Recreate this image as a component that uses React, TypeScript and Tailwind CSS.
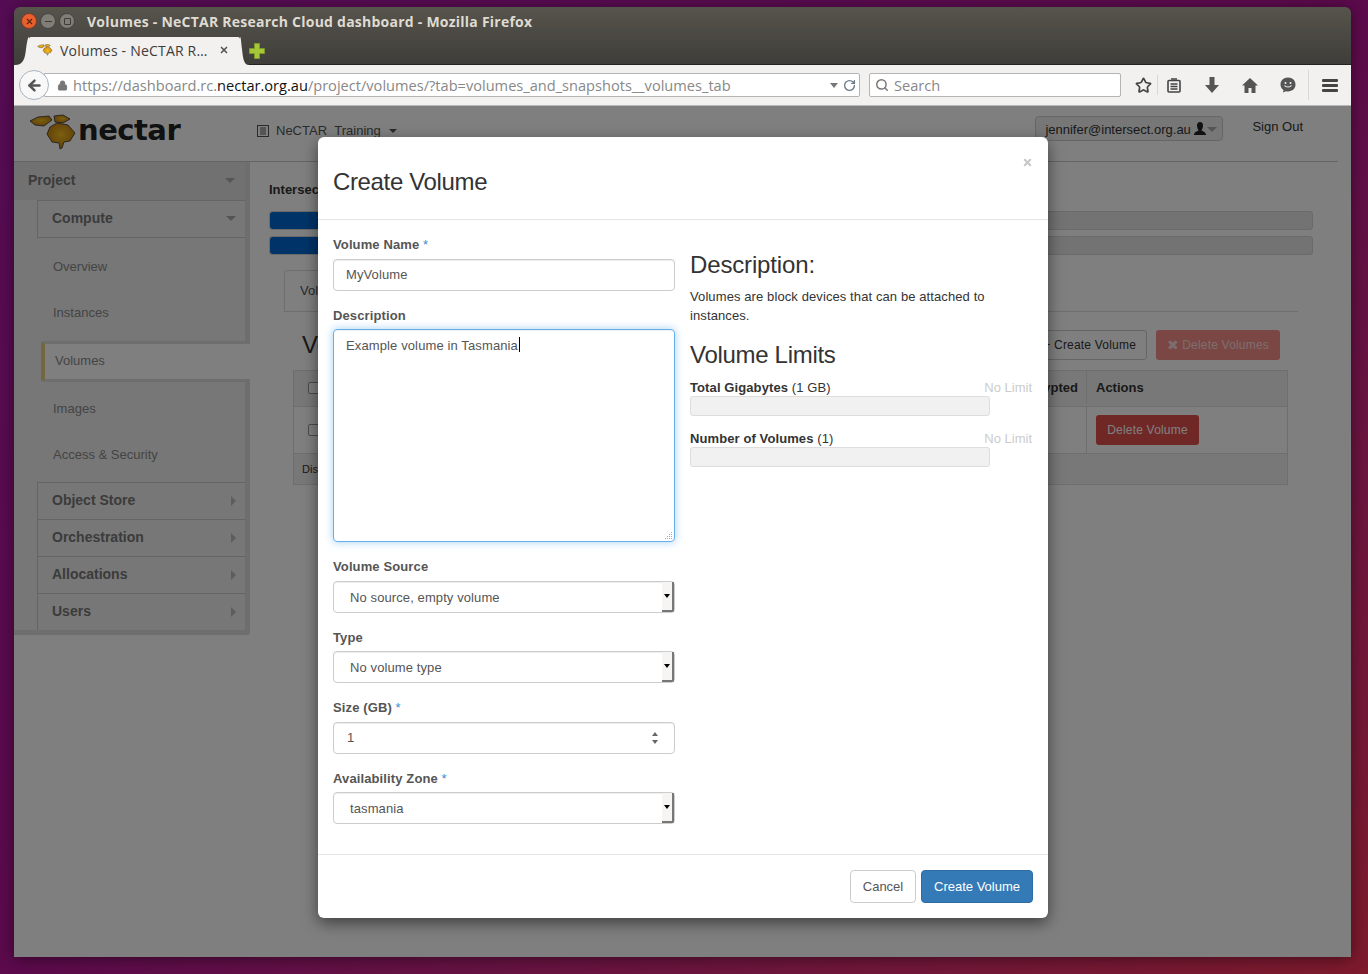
import { ArrowLeft, Lock, RotateCw, Search, Star, X } from 'lucide-react'

const sans = "font-['Liberation_Sans',Arial,sans-serif]"
const chrome = "font-['Open_Sans','Noto_Sans',sans-serif]"

function Hexes({ className }: { className: string }) {
  return (
    <svg viewBox="0 0 46 37" className={className}>
      <defs>
        <radialGradient id="honey" cx="0.5" cy="0.45" r="0.6">
          <stop offset="0" stopColor="#f4c020" />
          <stop offset="1" stopColor="#c07a10" />
        </radialGradient>
      </defs>
      <path d="M0 7 L8 3 L19 2 L22 6 L14 12 L5 11 Z" fill="url(#honey)" stroke="#333" strokeWidth="0.8" />
      <path d="M24 2 L33 1 L40 5 L33 9 L25 8 Z" fill="url(#honey)" stroke="#333" strokeWidth="0.8" />
      <path d="M27 9 L38 11 L45 19 L40 27 L34 28 L32 34 L30 35 L29 29 L22 28 L17 20 L20 13 Z" fill="url(#honey)" stroke="#333" strokeWidth="0.8" />
    </svg>
  )
}

function SelectBox({ value }: { value: string }) {
  return (
    <div className="flex h-[32px] items-stretch rounded-[4px] border border-[#ccc] bg-white pl-[16px] text-[13px] tracking-[0.1px] text-[#555] shadow-[inset_0_1px_1px_rgba(0,0,0,0.075)]">
      <span className="flex-1 translate-y-px self-center">{value}</span>
      <span className="flex w-[12px] items-center justify-center rounded-br-[2px] border-r-2 border-b-2 border-[#777] bg-[#f6f5f4]">
        <span className="h-0 w-0 border-x-[3px] border-t-[4px] border-x-transparent border-t-black" />
      </span>
    </div>
  )
}

function Label({ text, req, wide }: { text: string; req?: boolean; wide?: boolean }) {
  return (
    <div className={`${wide ? 'mb-[4px]' : 'mb-[3px]'} mt-[15px] h-[20px] text-[13px] leading-[20px] font-bold tracking-[0.12px] text-[#555]`}>
      {text}
      {req && <span className="font-normal text-[#428bca]"> *</span>}
    </div>
  )
}

function Quota({ name, used }: { name: string; used: string }) {
  return (
    <div className="mb-[13px] w-[342px]">
      <div className="flex h-[19px] items-center justify-between text-[13px] tracking-[0.1px] text-[#333]">
        <span><b>{name}</b> {used}</span>
        <span className="tracking-normal text-[#ccc]">No Limit</span>
      </div>
      <div className="-mt-px h-[20px] w-[300px] rounded-[3px] border border-[#ddd] bg-[#f1f1f1]" />
    </div>
  )
}

function SideSub({ label }: { label: string }) {
  return (
    <div className="flex h-[37px] items-center justify-between border-t border-l border-[#c8c8c8] pr-[9px] pb-[2px] pl-[14px] text-[14px] font-bold text-[#777]">
      {label}
      <span className="h-0 w-0 translate-y-px border-y-[5px] border-l-[5px] border-y-transparent border-l-[#bbb]" />
    </div>
  )
}

function Sidebar() {
  const link = 'flex h-[46px] items-center pl-[16px] text-[13px] text-[#8a8a8a]'
  return (
    <aside className="w-[236px] shrink-0">
      <div className="flex h-[38px] items-center justify-between border-r-[5px] border-[#dcdcdc] bg-[#e2e2e2] pr-[10px] pb-[2px] pl-[14px] text-[14px] font-bold text-[#777]">
        Project
        <span className="h-0 w-0 border-x-[5px] border-t-[5px] border-x-transparent border-t-[#aaa]" />
      </div>
      <div className="border-r-[5px] border-[#dcdcdc] bg-[#eee] pb-[5px] pl-[23px]">
        <div className="flex h-[38px] items-center justify-between border-y border-l border-[#c8c8c8] pr-[9px] pb-[2px] pl-[14px] text-[14px] font-bold text-[#777]">
          Compute
          <span className="h-0 w-0 border-x-[5px] border-t-[5px] border-x-transparent border-t-[#aaa]" />
        </div>
        <div className={`${link} mt-[6px]`}>Overview</div>
        <div className={link}>Instances</div>
      </div>
      <div className="flex h-[41px] bg-[#eee] pl-[27px]">
        <div className="flex flex-1 items-center rounded-l-[3px] border-y-[3px] border-l-4 border-y-[#dcdcdc] border-l-[#e6cf85] bg-white pb-[1px] pl-[10px] text-[13px] text-[#8a8a8a]">
          Volumes
        </div>
      </div>
      <div className="border-r-[5px] border-[#dcdcdc] bg-[#eee] pt-[4px] pb-[4px] pl-[23px]">
        <div className={link}>Images</div>
        <div className={link}>Access &amp; Security</div>
      </div>
      <div className="rounded-br-[3px] border-r-[5px] border-b-[5px] border-[#dcdcdc] bg-[#eee] pl-[23px]">
        <SideSub label="Object Store" />
        <SideSub label="Orchestration" />
        <SideSub label="Allocations" />
        <SideSub label="Users" />
      </div>
    </aside>
  )
}

function Dashboard() {
  return (
    <div className={`flex h-[851px] flex-col bg-white ${sans}`}>
      <header className="mr-[13px] flex h-[56px] shrink-0 border-b border-[#c8c8c8]">
        <div className="mt-[8px] ml-[16px] flex w-[227px] items-start">
          <Hexes className="h-[37px] w-[46px]" />
          <span className="mt-[1px] ml-[2px] font-['DejaVu_Sans',sans-serif] text-[29px] leading-[30px] font-bold tracking-[-0.5px] text-[#222]">nectar</span>
        </div>
        <div className="mt-[16px] flex h-[18px] items-center text-[13px] text-[#555]">
          <svg viewBox="0 0 12 12" className="h-[12px] w-[12px]" fill="none" stroke="#555" strokeWidth="1">
            <rect x="0.5" y="0.5" width="11" height="11" />
            <path d="M3 3h6M3 5h6M3 7h6M3 9h6" />
          </svg>
          <span className="ml-[7px]">NeCTAR_Training</span>
          <span className="ml-[8px] h-0 w-0 border-x-[4px] border-t-[4px] border-x-transparent border-t-[#555]" />
        </div>
        <div className="mt-[10px] ml-auto flex h-[25px] w-[188px] items-center rounded-[4px] border border-[#ccc] bg-[#eee] pt-[2px] pl-[9px] text-[13px] text-[#333]">
          jennifer@intersect.org.au
          <svg viewBox="0 0 12 14" className="ml-[3px] h-[14px] w-[12px] -translate-y-px" fill="#222"><path d="M6 0c2 0 3 1.500 3 3.500S8 7.500 7.500 8.500C9 9.500 12 10 12 13H0c0-3 3-3.500 4.500-4.500C4 7.500 3 5.500 3 3.500S4 0 6 0z" /></svg>
          <span className="ml-[1px] h-0 w-0 border-x-[5px] border-t-[5px] border-x-transparent border-t-[#aaa]" />
        </div>
        <div className="mt-[13px] mr-[35px] ml-[29px] text-[13px] leading-[15px] text-[#333]">Sign Out</div>
      </header>
      <div className="flex flex-1">
        <Sidebar />
        <main className="flex-1 pt-[20px] pr-[38px] pl-[19px]">
          <div className="h-[15px] text-[13px] leading-[15px] font-bold text-[#333]">Intersect</div>
          <div className="mt-[14px] h-[19px] rounded-[3px] border border-[#d4d4d4] bg-[#e6e6e6]">
            <div className="h-full w-1/5 rounded-[3px] bg-[#0068d0]" />
          </div>
          <div className="mt-[6px] h-[19px] rounded-[3px] border border-[#d4d4d4] bg-[#e6e6e6]">
            <div className="h-full w-1/5 rounded-[3px] bg-[#0068d0]" />
          </div>
          <div className="mt-[15px] ml-[15px] w-[1014px] border-b border-[#ddd]">
            <div className="flex h-[41px] w-[100px] items-center rounded-t-[4px] border-x border-t border-[#ddd] pl-[15px] text-[13px] text-[#555]">Volumes</div>
          </div>
          <div className="mt-[18px] ml-[24px] flex h-[30px] w-[995px] items-center justify-between pr-[8px]">
            <span className="ml-[9px] text-[24px] text-[#333]">Volumes</span>
            <div className="flex gap-[9px] text-[12px] tracking-[0.2px]">
              <span className="flex h-[30px] w-[117px] items-center justify-end rounded-[3px] border border-[#ccc] pr-[10px] text-[#333]">+ Create Volume</span>
              <span className="flex h-[30px] w-[124px] items-center justify-center gap-[3px] rounded-[3px] bg-[#f58f8b] text-[#fbdcdc]"><span className="text-[14px] leading-none">✖</span>Delete Volumes</span>
            </div>
          </div>
          <div className="mt-[10px] ml-[24px] w-[995px] border border-[#ddd] text-[13px]">
            <div className="flex h-[36px] items-center border-b border-[#ddd] bg-[#f0f0f0] pb-[2px] font-bold text-[#333]">
              <span className="ml-[14px] h-[12px] w-[12px] rounded-[2px] border border-[#999] bg-white" />
              <span className="ml-auto pr-[8px]">Encrypted</span>
              <span className="flex h-full w-[201px] items-center border-l border-[#ddd] pl-[9px]">Actions</span>
            </div>
            <div className="flex h-[47px] items-center border-b border-[#ddd]">
              <span className="ml-[14px] h-[12px] w-[12px] rounded-[2px] border border-[#999] bg-white" />
              <span className="ml-auto flex h-full w-[201px] items-center border-l border-[#ddd] pl-[9px]">
                <span className="flex h-[30px] w-[103px] items-center justify-center rounded-[3px] bg-[#e0504c] text-[12px] tracking-[0.2px] text-white">Delete Volume</span>
              </span>
            </div>
            <div className="flex h-[30px] items-center bg-[#f0f0f0] pl-[8px] text-[11px] text-[#333]">Displaying 1 item</div>
          </div>
        </main>
      </div>
    </div>
  )
}

function CreateVolumeModal() {
  return (
    <div className={`h-[781px] w-[730px] rounded-[6px] bg-white text-[#333] shadow-[0_5px_15px_rgba(0,0,0,0.5)] ${sans}`}>
      <div className="relative flex h-[83px] items-end border-b border-[#e5e5e5] pb-[23px] pl-[15px]">
        <h3 className="text-[24px] leading-[28px] tracking-[-0.35px]">Create Volume</h3>
        <X className="absolute top-[20px] right-[15px] h-[11px] w-[11px] text-[#c8c8c8]" strokeWidth={4.5} />
      </div>
      <div className="flex h-[634px] gap-[15px] pl-[15px]">
        <div className="w-[342px]">
          <Label text="Volume Name" req wide />
          <div className="flex h-[32px] items-center rounded-[4px] border border-[#ccc] pb-[1px] pl-[12px] text-[13px] tracking-[0.1px] text-[#555] shadow-[inset_0_1px_1px_rgba(0,0,0,0.075)]">MyVolume</div>
          <Label text="Description" />
          <div className="relative h-[213px] rounded-[4px] border border-[#66afe9] pt-[5px] pl-[12px] text-[13px] leading-[18px] tracking-[0.12px] text-[#555] shadow-[inset_0_1px_1px_rgba(0,0,0,0.075),0_0_8px_rgba(102,175,233,0.6)]">
            Example volume in Tasmania<span className="ml-px inline-block h-[15px] w-px translate-y-[2px] bg-black" />
            <svg viewBox="0 0 9 9" className="absolute right-[1px] bottom-[1px] h-[9px] w-[9px]" fill="#aaa">
              <path d="M7 1h1v1H7zM5 3h1v1H5zM7 3h1v1H7zM3 5h1v1H3zM5 5h1v1H5zM7 5h1v1H7zM1 7h1v1H1zM3 7h1v1H3zM5 7h1v1H5zM7 7h1v1H7z" />
            </svg>
          </div>
          <Label text="Volume Source" wide />
          <SelectBox value="No source, empty volume" />
          <Label text="Type" />
          <SelectBox value="No volume type" />
          <Label text="Size (GB)" req wide />
          <div className="flex h-[32px] items-center justify-between rounded-[4px] border border-[#ccc] pr-[15px] pl-[13px] text-[13px] text-[#555] shadow-[inset_0_1px_1px_rgba(0,0,0,0.075)]">
            1
            <svg viewBox="0 0 8 14" className="h-[14px] w-[8px]" fill="#666"><path d="M4 1l3 4H1zM4 13l3-4H1z" /></svg>
          </div>
          <Label text="Availability Zone" req />
          <SelectBox value="tasmania" />
        </div>
        <div className="flex-1 pt-[15px]">
          <h3 className="mt-[16px] text-[24px] leading-[28px] tracking-[-0.15px]">Description:</h3>
          <p className="mt-[8px] w-[310px] text-[13px] leading-[19px] tracking-[0.1px]">Volumes are block devices that can be attached to instances.</p>
          <h3 className="mt-[16px] mb-[9px] text-[24px] leading-[28px] tracking-[-0.3px]">Volume Limits</h3>
          <Quota name="Total Gigabytes" used="(1 GB)" />
          <Quota name="Number of Volumes" used="(1)" />
        </div>
      </div>
      <div className="flex h-[64px] items-start justify-end gap-[5px] border-t border-[#e5e5e5] pt-[15px] pr-[15px] text-[13px]">
        <span className="flex h-[33px] w-[66px] items-center justify-center rounded-[4px] border border-[#ccc] text-[#555]">Cancel</span>
        <span className="flex h-[33px] w-[112px] items-center justify-center rounded-[4px] border border-[#2e6da4] bg-[#337ab7] text-white">Create Volume</span>
      </div>
    </div>
  )
}

function BrowserChrome() {
  return (
    <div className={chrome}>
      <div className="bg-gradient-to-b from-[#57544c] to-[#3e3d39]">
        <div className="flex h-[30px] items-center pb-[2px] pl-[7px]">
          <div className="flex items-center gap-[3px]">
            <span className="flex h-[16px] w-[16px] items-center justify-center rounded-full border border-[#7c3a28] bg-[#e8602c]">
              <X className="h-[9px] w-[9px] text-[#5c2410]" strokeWidth={3} />
            </span>
            <span className="flex h-[16px] w-[16px] items-center justify-center rounded-full border border-[#444] bg-[#7f7d76]">
              <span className="h-px w-[7px] bg-[#3c3b37]" />
            </span>
            <span className="flex h-[16px] w-[16px] items-center justify-center rounded-full border border-[#444] bg-[#7f7d76]">
              <span className="h-[7px] w-[7px] rounded-[1px] border border-[#3c3b37]" />
            </span>
          </div>
          <span className="ml-[12px] text-[14px] font-bold tracking-[0.24px] text-[#dfdbd2]">Volumes - NeCTAR Research Cloud dashboard - Mozilla Firefox</span>
        </div>
        <div className="flex h-[28px] items-stretch pl-px">
          <svg viewBox="0 0 14 28" className="h-[28px] w-[14px]"><path d="M0 28C8 28 10 22 11 12 12 4 13 0 14 0V28Z" fill="#f2f1f0" /></svg>
          <div className="flex w-[211px] items-center rounded-t-[2px] bg-[#f2f1f0] pb-[2px] text-[14px] tracking-[0.2px] text-[#3c3c3c]">
            <Hexes className="ml-[8px] h-[12px] w-[16px]" />
            <span className="ml-[7px] w-[156px] truncate">Volumes - NeCTAR R…</span>
            <X className="ml-[3px] h-[10px] w-[10px] text-[#555]" strokeWidth={4} />
          </div>
          <svg viewBox="0 0 9 28" className="h-[28px] w-[9px]"><path d="M9 28C4 28 3 22 2 12 1 4 1 0 0 0V28Z" fill="#f2f1f0" /></svg>
          <div className="flex flex-1 items-center border-b border-[#242320]">
            <svg viewBox="0 0 16 16" className="h-[16px] w-[16px]"><path d="M5.5 0.5h5v5h5v5h-5v5h-5v-5h-5v-5h5z" fill="#a5c63a" stroke="#7a9a25" /></svg>
          </div>
        </div>
      </div>
      <div className="flex h-[41px] items-center border-b border-[#b8b8b8] bg-[#f2f1f0] pl-[5px]">
        <span className="z-10 flex h-[30px] w-[30px] shrink-0 items-center justify-center rounded-full border border-[#a8b4bf] bg-[#f8f8f8]">
          <ArrowLeft className="h-[17px] w-[17px] text-[#555]" strokeWidth={3.5} />
        </span>
        <div className="-ml-[5px] flex h-[24px] w-[816px] items-center rounded-r-[2px] border border-[#b4b4b4] bg-white pl-[12px] text-[14.6px] text-[#888]">
          <Lock className="h-[11px] w-[11px] text-[#777]" fill="#777" />
          <span className="ml-[5px] flex-1 translate-y-px whitespace-nowrap">https://dashboard.rc.<span className="text-[#111]">nectar.org.au</span>/project/volumes/?tab=volumes_and_snapshots__volumes_tab</span>
          <span className="h-0 w-0 border-x-[4px] border-t-[5px] border-x-transparent border-t-[#777]" />
          <RotateCw className="mr-[3px] ml-[5px] h-[13px] w-[13px] text-[#6b7a88]" strokeWidth={2.5} />
        </div>
        <div className="ml-[9px] flex h-[24px] w-[252px] items-center rounded-[2px] border border-[#b4b4b4] bg-white pl-[5px] text-[14.6px] text-[#888]">
          <Search className="h-[14px] w-[14px] text-[#777]" strokeWidth={2.5} />
          <span className="ml-[5px] translate-y-px">Search</span>
        </div>
        <Star className="ml-[14px] h-[17px] w-[17px] text-[#444]" strokeWidth={2.4} />
        <span className="ml-[5px] h-[20px] w-px bg-[#d8d8d8]" />
        <svg viewBox="0 0 14 15" className="ml-[9px] h-[15px] w-[14px]" fill="none" stroke="#444" strokeWidth="1.6">
          <rect x="1" y="2.5" width="12" height="11.5" rx="1" />
          <path d="M4 1h6M3.5 6h7M3.5 8.5h7M3.5 11h7" />
        </svg>
        <svg viewBox="0 0 14 16" className="ml-[24px] h-[16px] w-[14px]" fill="#555"><path d="M4.5 0h5v8H14L7 16 0 8h4.5z" /></svg>
        <svg viewBox="0 0 16 15" className="ml-[23px] h-[15px] w-[16px]" fill="#555"><path d="M8 0L16 7.5H13.5V15H9.5V10H6.5V15H2.5V7.5H0Z" /></svg>
        <svg viewBox="0 0 16 16" className="ml-[22px] h-[16px] w-[16px]">
          <path d="M8 0.5C3.5 0.5 0.5 3.5 0.5 7.5c0 2.5 1.2 4.4 3 5.6L3 15.5l3-1.3c.6.1 1.3.2 2 .2 4.5 0 7.5-3 7.5-6.9S12.5 0.5 8 0.5z" fill="#555" />
          <circle cx="5.5" cy="6" r="1" fill="#f2f1f0" />
          <circle cx="10.5" cy="6" r="1" fill="#f2f1f0" />
          <path d="M4.5 8.5c1.5 2 5.5 2 7 0" fill="none" stroke="#f2f1f0" strokeWidth="1.2" />
        </svg>
        <span className="ml-[12px] h-[30px] w-px bg-[#d8d8d8]" />
        <span className="ml-[13px] flex w-[16px] flex-col gap-[2px]">
          <span className="h-[3px] rounded-[1px] bg-[#444]" />
          <span className="h-[3px] rounded-[1px] bg-[#444]" />
          <span className="h-[3px] rounded-[1px] bg-[#444]" />
        </span>
      </div>
    </div>
  )
}

export default function App() {
  return (
    <div className="h-[974px] w-[1368px] overflow-hidden bg-gradient-to-br from-[#560c55] via-[#5c0a4c] to-[#7e1a2c] pt-[7px] pl-[14px]">
      <div className="w-[1337px] overflow-hidden rounded-t-[6px] shadow-[0_2px_16px_rgba(0,0,0,0.45)]">
        <BrowserChrome />
        <div className="relative">
          <Dashboard />
          <div className="absolute inset-0 bg-black/50 pt-[31px] pl-[304px]">
            <CreateVolumeModal />
          </div>
        </div>
      </div>
    </div>
  )
}
